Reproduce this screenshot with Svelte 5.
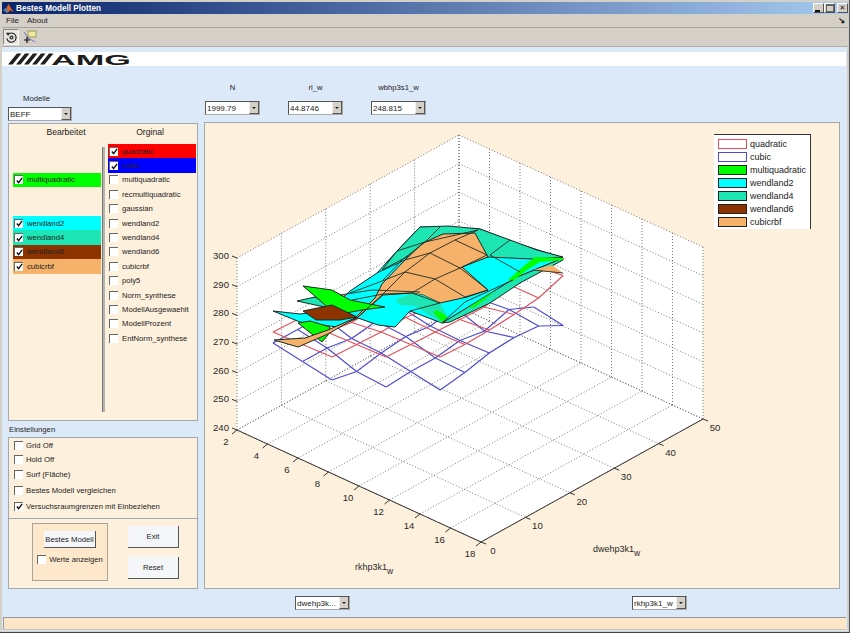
<script>
  const original = [
    { name: 'quadratic', color: '#ff0000', on: true },
    { name: 'cubic', color: '#0000ff', on: true },
    { name: 'multiquadratic' },
    { name: 'recmultiquadratic' },
    { name: 'gaussian' },
    { name: 'wendland2' },
    { name: 'wendland4' },
    { name: 'wendland6' },
    { name: 'cubicrbf' },
    { name: 'poly5' },
    { name: 'Norm_synthese' },
    { name: 'ModellAusgewaehlt' },
    { name: 'ModellProzent' },
    { name: 'EntNorm_synthese' }
  ];
  const edited = [
    null,
    null,
    { name: 'multiquadratic', color: '#00ff00' },
    null,
    null,
    { name: 'wendland2', color: '#00ffff' },
    { name: 'wendland4', color: '#1de5b4' },
    { name: 'wendland6', color: '#8c3300' },
    { name: 'cubicrbf', color: '#f6b26b' }
  ];
  const settings = [
    { name: 'Grid Off' },
    { name: 'Hold Off' },
    { name: 'Surf (Fläche)' },
    { name: 'Bestes Modell vergleichen', spaced: true },
    { name: 'Versuchsraumgrenzen mit Einbeziehen', on: true, spaced: true }
  ];
  const legend = [
    { name: 'quadratic', fill: '#fff', edge: '#e0505a' },
    { name: 'cubic', fill: '#fff', edge: '#4a4ad0' },
    { name: 'multiquadratic', fill: '#00ff00', edge: '#222' },
    { name: 'wendland2', fill: '#00ffff', edge: '#222' },
    { name: 'wendland4', fill: '#1de5b4', edge: '#222' },
    { name: 'wendland6', fill: '#8c3300', edge: '#222' },
    { name: 'cubicrbf', fill: '#f6b26b', edge: '#222' }
  ];

  // box corners in page coordinates, the svg viewBox starts at the panel corner
  const left = [237, 430];
  const bottom = [481, 542];
  const right = [703, 419];
  const back = [459, 307];
  const H = 172;
  const lerp = (a, b, t) => [a[0] + (b[0] - a[0]) * t, a[1] + (b[1] - a[1]) * t];

  const grid = [];
  for (let k = 0; k <= 6; k++) {
    const dz = (k * H) / 6;
    grid.push([left[0], left[1] - dz, back[0], back[1] - dz]);
    grid.push([back[0], back[1] - dz, right[0], right[1] - dz]);
  }
  for (let k = 0; k <= 5; k++) {
    const a = lerp(left, back, k / 5);
    const b = lerp(bottom, right, k / 5);
    grid.push([a[0], a[1], b[0], b[1]]);
    grid.push([a[0], a[1], a[0], a[1] - H]);
  }
  for (let k = 0; k <= 8; k++) {
    const a = lerp(left, bottom, k / 8);
    const b = lerp(back, right, k / 8);
    grid.push([a[0], a[1], b[0], b[1]]);
    grid.push([b[0], b[1], b[0], b[1] - H]);
  }

  const zTicks = [300, 290, 280, 270, 260, 250, 240].map((v, k) => ({ v, y: 258 + (k * H) / 6 }));
  const xTicks = [2, 4, 6, 8, 10, 12, 14, 16, 18].map((v, k) => {
    const p = lerp(left, bottom, k / 8);
    return { v, x: p[0], y: p[1] };
  });
  const yTicks = [0, 10, 20, 30, 40, 50].map((v, k) => {
    const p = lerp(bottom, right, k / 5);
    return { v, x: p[0], y: p[1] };
  });

  // wire meshes: lattice with a staircase boundary, y offsets per vertex
  const minJ = [0, 0, 0, 1, 2];
  const maxJ = [4, 5, 6, 7, 7];
  function mesh(y0, ay, by, bump) {
    const at = (i, j) => {
      const b = bump[i + ',' + j] || 0;
      return [273 + 29.5 * i + 24.6 * j, y0 + ay * i + by * j + b];
    };
    const lines = [];
    for (let i = 0; i <= 4; i++) {
      for (let j = minJ[i]; j <= maxJ[i]; j++) {
        const p = at(i, j);
        if (j < maxJ[i]) {
          const q = at(i, j + 1);
          lines.push([p[0], p[1], q[0], q[1]]);
        }
        if (i < 4 && j >= minJ[i + 1] && j <= maxJ[i + 1]) {
          const q = at(i + 1, j);
          lines.push([p[0], p[1], q[0], q[1]]);
        }
      }
    }
    return lines;
  }
  const blueMesh = mesh(343, 18.5, -13.5, {
    '2,1': 5, '3,1': 2, '4,3': -4, '4,4': -10, '4,5': -12, '4,6': -10, '4,7': 3,
    '3,6': -8, '3,7': 3, '1,2': 4, '2,3': -3, '3,4': -4, '2,5': -5
  });
  const redMesh = mesh(332, 12.5, -12.5, {
    '4,7': -19, '4,6': -9, '4,5': -5, '4,4': -2, '3,7': -16, '3,6': -10, '2,3': -2, '1,2': 3
  });

  const teal = '#1de5b4';
  const cyan = '#00ffff';
  const lime = '#00ff00';
  const sand = '#f6b26b';
  const surfaces = [
    { fill: cyan, line: true, pts: '273,311 300,322 337,327 358,318 378,325 395,327 410,311 442,323 490,295 515,278 563,258 510,241 480,229 420,227 397,251 377,273 350,291 330,310 300,314' },
    { fill: teal, line: true, pts: '420,227 448,226 480,229 510,240 537,250 563,257 533,259 487,257 470,250 440,240 405,258 382,270 397,251' },
    { fill: lime, line: true, pts: '298,323 310,321 330,327 328,335 322,342' },
    { fill: sand, line: true, pts: '443,234 475,233 488,257 462,267 488,290 467,297 440,303 423,295 412,293 383,295 358,317 340,327 328,334 298,347 274,340 305,338 328,330 355,318 375,298 382,284 405,260 423,243' },
    { fill: teal, pts: '395,300 412,293 423,295 440,303 448,318 442,323 415,306 400,305' },
    { fill: teal, line: true, pts: '442,323 478,301 515,278 563,258 563,260 520,283 490,303 450,322' },
    { fill: sand, pts: '533,270 552,265 563,273 540,271' },
    { fill: lime, pts: '535,257 563,258 563,260 540,262 527,270 513,281 508,280 525,265' },
    { fill: lime, pts: '468,308 480,300 495,291 488,297 475,307' },
    { fill: lime, pts: '433,312 442,322 448,317 437,310' },
    { fill: teal, line: true, pts: '297,301 315,297 336,310 320,306' },
    { fill: lime, line: true, pts: '303,286 332,290 350,300 385,307 362,310 335,315 323,303' },
    { fill: '#8c3300', line: true, pts: '303,311 332,305 357,317 340,320 316,320' }
  ];
  const edges = [
    '358,317 383,294 405,272 430,253 455,240 478,230',
    '412,293 435,279 460,268 487,255',
    '383,280 402,260 425,242 440,227',
    '430,253 460,268 488,290',
    '405,272 435,279 465,297',
    '455,240 487,255',
    '383,294 412,293 440,303',
    '397,251 425,242 478,230',
    '377,273 405,260 430,253',
    '350,293 377,283 405,272',
    '352,300 383,294',
    '340,295 372,290 420,292',
    '533,270 563,273',
    '465,297 488,290',
    '443,322 465,302 513,280',
    '490,255 510,240',
    '490,255 520,272',
    '410,311 440,303'
  ];
</script>

{#snippet check(on)}
  <span class="box">
    {#if on}
      <svg viewBox="0 0 8 8" width="7" height="7"><path d="M1 4 L3 6.5 L7 1" fill="none" stroke="#111" stroke-width="1.6" /></svg>
    {/if}
  </span>
{/snippet}

{#snippet popup(text, width)}
  <div class="popup" style="width: {width}px">
    <span class="popup-text">{text}</span>
    <span class="popup-btn"><i></i></span>
  </div>
{/snippet}

<div class="window">
  <div class="title">
    <svg class="app-icon" viewBox="0 0 12 12" width="11" height="11">
      <path d="M0 8 L4 5 L6 1 L9 6 L12 10 L8 8 L5 11 Z" fill="#d9641e" />
      <path d="M0 8 L4 5 L5 11 Z" fill="#3f7fc0" />
    </svg>
    <span>Bestes Modell Plotten</span>
    <div class="win-btns">
      <button class="win-btn"><i class="min"></i></button>
      <button class="win-btn"><i class="max"></i></button>
      <button class="win-btn close">✕</button>
    </div>
  </div>

  <div class="menu">
    <span>File</span>
    <span>About</span>
    <span class="dock">↘</span>
  </div>

  <div class="toolbar">
    <div class="tool pressed">
      <svg viewBox="0 0 14 14" width="13" height="13">
        <path d="M3 4 A5 5 0 1 1 2 8" fill="none" stroke="#222" stroke-width="1.2" />
        <path d="M1 2 L4.5 2 L3.5 5.5 Z" fill="#222" />
        <circle cx="7" cy="7" r="2.2" fill="#333" />
        <circle cx="7" cy="7" r="0.8" fill="#ddd" />
      </svg>
    </div>
    <div class="tool">
      <svg viewBox="0 0 14 14" width="14" height="14">
        <rect x="5" y="1" width="8" height="6" fill="#efe9a0" stroke="#8a8a50" stroke-width="0.8" />
        <path d="M1 2 L5 8 L12 12" fill="none" stroke="#6a6ac8" stroke-width="0.9" />
        <path d="M4 7 V13 M1 10 H7" stroke="#111" stroke-width="1.2" />
      </svg>
    </div>
  </div>

  <div class="body">
    <div class="logo">
      <svg viewBox="0 0 130 14" width="130" height="14">
        <polygon points="6,12.5 15,1.5 19.5,1.5 10.5,12.5" fill="#1c1c1c" />
        <polygon points="14,12.5 23,1.5 27.5,1.5 18.5,12.5" fill="#1c1c1c" />
        <polygon points="22,12.5 31,1.5 35.5,1.5 26.5,12.5" fill="#1c1c1c" />
        <polygon points="30,12.5 39,1.5 43.5,1.5 34.5,12.5" fill="#1c1c1c" />
        <polygon points="38,12.5 47,1.5 51.5,1.5 42.5,12.5" fill="#1c1c1c" />
        <text x="49" y="12.6" class="logo-text" textLength="80" lengthAdjust="spacingAndGlyphs">AMG</text>
      </svg>
    </div>

    <div class="content">
      <div class="head-left">
        <span class="modelle">Modelle</span>
        {@render popup('BEFF', 64)}
      </div>
      <div class="head-right">
        <div class="param"><span>N</span>{@render popup('1999.79', 55)}</div>
        <div class="param"><span>rl_w</span>{@render popup('44.8746', 55)}</div>
        <div class="param"><span>wbhp3s1_w</span>{@render popup('248.815', 55)}</div>
      </div>

      <div class="side">
        <div class="panel list">
          <div class="col">
            <div class="col-head edited">Bearbeitet</div>
            {#each edited as row}
              {#if row}
                <div class="row" style="background: {row.color}">
                  {@render check(true)}<span>{row.name}</span>
                </div>
              {:else}
                <div class="row"></div>
              {/if}
            {/each}
          </div>
          <div class="slider"></div>
          <div class="col">
            <div class="col-head orig">Orginal</div>
            {#each original as row}
              <div class="row" style={row.color ? `background: ${row.color}` : ''}>
                {@render check(row.on)}<span>{row.name}</span>
              </div>
            {/each}
          </div>
        </div>

        <div class="settings-label">Einstellungen</div>
        <div class="panel settings">
          {#each settings as row}
            <div class="set-row" class:spaced={row.spaced}>
              {@render check(row.on)}<span>{row.name}</span>
            </div>
          {/each}
        </div>
        <div class="panel actions">
          <div class="best">
            <button class="btn best-btn">Bestes Modell</button>
            <div class="werte">{@render check(false)}<span>Werte anzeigen</span></div>
          </div>
          <div class="btn-col">
            <button class="btn exit">Exit</button>
            <button class="btn reset">Reset</button>
          </div>
        </div>
      </div>

      <div class="panel plot">
        <svg viewBox="204 122 636 467" width="636" height="467">
          <polygon points="237,258 459,135 703,247 703,419 481,542 237,430" fill="#fff" />
          {#each grid as g}
            <line x1={g[0]} y1={g[1]} x2={g[2]} y2={g[3]} class="dots" />
          {/each}
          {#each blueMesh as l}
            <line x1={l[0]} y1={l[1]} x2={l[2]} y2={l[3]} stroke="#4a4ad0" stroke-width="1.1" />
          {/each}
          {#each redMesh as l}
            <line x1={l[0]} y1={l[1]} x2={l[2]} y2={l[3]} stroke="#e0505a" stroke-width="1.1" />
          {/each}
          {#each surfaces as s}
            <polygon points={s.pts} fill={s.fill} stroke={s.line ? '#1a2a22' : 'none'} stroke-width="1" />
          {/each}
          {#each edges as e}
            <polyline points={e} fill="none" stroke="#1e2a20" stroke-width="0.9" />
          {/each}

          <polyline points="237,430 481,542 703,419" fill="none" stroke="#333" stroke-width="1" />
          {#each zTicks as t}
            <line x1="232" y1={t.y - 2} x2="237" y2={t.y} stroke="#333" />
            <text x="229" y={t.y + 1} text-anchor="end" class="tick">{t.v}</text>
          {/each}
          {#each xTicks as t}
            <line x1={t.x} y1={t.y} x2={t.x - 5} y2={t.y + 4} stroke="#333" />
            <text x={t.x - 11} y={t.y + 15} text-anchor="middle" class="tick">{t.v}</text>
          {/each}
          {#each yTicks as t}
            <line x1={t.x} y1={t.y} x2={t.x + 5} y2={t.y + 2} stroke="#333" />
            <text x={t.x + 12} y={t.y + 12} text-anchor="middle" class="tick">{t.v}</text>
          {/each}
          <text x="355" y="570" class="axis">rkhp3k1<tspan dy="4" font-size="8.5">w</tspan></text>
          <text x="593" y="552" class="axis">dwehp3k1<tspan dy="4" font-size="8.5">w</tspan></text>
        </svg>

        <div class="legend">
          {#each legend as item}
            <div class="legend-row">
              <span class="swatch" style="background: {item.fill}; border-color: {item.edge}"></span>
              <span>{item.name}</span>
            </div>
          {/each}
        </div>
      </div>
    </div>

    <div class="foot">
      {@render popup('dwehp3k...', 55)}
      {@render popup('rkhp3k1_w', 55)}
    </div>
    <div class="status"></div>
  </div>
</div>

<style>
  :global(body) {
    margin: 0;
    background: #d4d0c8;
  }

  .window {
    width: 850px;
    height: 633px;
    box-sizing: border-box;
    padding: 2px 1px 1px 2px;
    display: flex;
    flex-direction: column;
    background: #d4d0c8;
    border-right: 1px solid #555;
    border-bottom: 1px solid #444;
    font-family: "Liberation Sans", Arial, sans-serif;
    font-size: 7.7px;
    color: #222;
    overflow: hidden;
  }

  .title {
    height: 12px;
    flex: none;
    display: flex;
    align-items: center;
    gap: 2px;
    padding-left: 1px;
    background: linear-gradient(to right, #0a246a, #a6caf0);
    color: #fff;
    font-weight: bold;
    font-size: 8.2px;
  }

  .win-btns {
    margin-left: auto;
    display: flex;
  }

  .win-btn {
    width: 11px;
    height: 10px;
    padding: 0;
    margin: 0;
    border: 1px solid;
    border-color: #fff #555 #555 #fff;
    background: #d4d0c8;
    color: #111;
    font-size: 7px;
    font-weight: bold;
    line-height: 8px;
    display: flex;
    align-items: center;
    justify-content: center;
    font-family: "DejaVu Sans", sans-serif;
  }

  .close {
    margin-left: 2px;
  }

  .min {
    width: 5px;
    height: 2px;
    background: #111;
    margin-top: 5px;
    margin-right: 2px;
  }

  .max {
    width: 6px;
    height: 5px;
    border: 1px solid #666;
    border-top-width: 2px;
  }

  .menu {
    height: 14px;
    flex: none;
    display: flex;
    align-items: center;
    gap: 8px;
    padding-left: 4px;
    font-size: 8px;
    box-sizing: border-box;
    border-bottom: 1px solid #a8a49c;
  }

  .dock {
    margin-left: auto;
    margin-right: 3px;
    font-size: 9px;
    font-weight: bold;
    font-family: "DejaVu Sans", sans-serif;
    color: #111;
  }

  .toolbar {
    height: 19px;
    flex: none;
    box-sizing: border-box;
    display: flex;
    align-items: center;
    gap: 3px;
    padding-left: 1px;
    border-bottom: 1px solid #b0aca4;
  }

  .tool {
    width: 16px;
    height: 16px;
    display: flex;
    align-items: center;
    justify-content: center;
  }

  .pressed {
    background: #e8e6e0;
    border-left: 1px solid #888;
    border-top: 1px solid #888;
    border-right: 1px solid #fff;
    border-bottom: 1px solid #fff;
    box-sizing: border-box;
  }

  .app-icon {
    flex: none;
  }

  .body {
    flex: 1;
    display: flex;
    flex-direction: column;
    background: #dce9f9;
    margin-right: 1px;
  }

  .logo {
    margin: 5px 1px 0 0;
    height: 14px;
    background: #fff;
    flex: none;
  }

  .logo svg {
    display: block;
    overflow: visible;
  }

  .logo-text {
    font-family: "Liberation Sans", Arial, sans-serif;
    font-weight: bold;
    font-size: 15px;
    fill: #1c1c1c;
  }

  .content {
    display: grid;
    grid-template-columns: 190px 636px;
    grid-template-rows: 56px 467px;
    column-gap: 6px;
    margin-left: 6px;
    flex: none;
  }

  .head-left {
    display: flex;
    flex-direction: column;
    justify-content: flex-end;
    padding-bottom: 1px;
    gap: 4px;
  }

  .modelle {
    margin-left: 15px;
  }

  .head-right {
    display: flex;
    align-items: flex-end;
    gap: 28px;
    padding: 0 0 7px 1px;
  }

  .param {
    width: 55px;
    display: flex;
    flex-direction: column;
    align-items: center;
    gap: 9px;
  }

  .popup {
    height: 14px;
    box-sizing: border-box;
    display: flex;
    align-items: center;
    background: #fff;
    border: 1px solid;
    border-color: #555 #aaa #aaa #555;
  }

  .popup-text {
    flex: 1;
    padding-left: 1px;
    white-space: nowrap;
    overflow: hidden;
    font-size: 8px;
  }

  .popup-btn {
    width: 10px;
    height: 12px;
    background: #d4d0c8;
    border-left: 1px solid #eee;
    border-right: 1px solid #555;
    border-bottom: 1px solid #555;
    box-sizing: border-box;
    display: flex;
    align-items: center;
    justify-content: center;
  }

  .popup-btn i {
    border-left: 2px solid transparent;
    border-right: 2px solid transparent;
    border-top: 2px solid #222;
  }

  .panel {
    box-sizing: border-box;
    background: #fdf0dc;
    border: 1px solid #a4a8ac;
  }

  .side {
    display: flex;
    flex-direction: column;
    padding-top: 1px;
  }

  .list {
    height: 298px;
    display: flex;
    padding-left: 4px;
  }

  .col {
    width: 88px;
    flex: none;
  }

  .col-head {
    height: 20px;
    text-align: center;
    font-size: 8.6px;
    padding-top: 3px;
    box-sizing: border-box;
    white-space: nowrap;
  }

  .edited {
    padding-left: 18px;
  }

  .orig {
    padding-right: 4px;
  }

  .row {
    height: 14.4px;
    display: flex;
    align-items: center;
    gap: 4px;
    padding-left: 1px;
    box-sizing: border-box;
    white-space: nowrap;
  }

  .slider {
    width: 3px;
    height: 265px;
    margin: 23px 3px 0 1px;
    flex: none;
    background: #b4b4b0;
    border-left: 1px solid #777;
    box-sizing: border-box;
  }

  .box {
    width: 8px;
    height: 8px;
    flex: none;
    background: #fff;
    border-top: 1px solid #666;
    border-left: 1px solid #666;
    display: flex;
    align-items: center;
    justify-content: center;
  }

  .settings-label {
    height: 16px;
    display: flex;
    align-items: center;
    padding-left: 1px;
  }

  .settings {
    height: 81px;
    padding-left: 5px;
    border-bottom: none;
  }

  .set-row {
    height: 14.5px;
    display: flex;
    align-items: center;
    gap: 3px;
  }

  .spaced {
    margin-top: 1.5px;
  }

  .actions {
    height: 71px;
    display: flex;
    align-items: flex-start;
    padding: 4px 0 0 23px;
    gap: 20px;
  }

  .best {
    width: 76px;
    height: 58px;
    box-sizing: border-box;
    background: #fde8cc;
    border: 1px solid #a8a49c;
    display: flex;
    flex-direction: column;
    align-items: center;
    padding-top: 7px;
    gap: 7px;
  }

  .btn {
    padding: 0;
    background: #f4f6f9;
    border: none;
    border-right: 1px solid #555;
    border-bottom: 1px solid #555;
    font-family: inherit;
    font-size: 7.7px;
    color: #222;
  }

  .best-btn {
    width: 52px;
    height: 17px;
  }

  .werte {
    display: flex;
    align-items: center;
    gap: 3px;
    white-space: nowrap;
  }

  .btn-col {
    display: flex;
    flex-direction: column;
    gap: 9px;
    padding-top: 3px;
  }

  .exit,
  .reset {
    width: 51px;
    height: 22px;
  }

  .plot {
    position: relative;
    background: #fdf0dc;
    border: none;
    box-shadow: inset 0 0 0 1px #a4a8ac;
  }

  .plot svg {
    display: block;
  }

  .dots {
    stroke: #555;
    stroke-width: 0.8;
    stroke-dasharray: 1 2;
  }

  .tick {
    font-family: "Liberation Sans", Arial, sans-serif;
    font-size: 9.6px;
    fill: #2a2a2a;
  }

  .axis {
    font-family: "Liberation Sans", Arial, sans-serif;
    font-size: 9px;
    fill: #2a2a2a;
  }

  .legend {
    position: absolute;
    left: 510px;
    top: 12px;
    width: 97px;
    height: 95px;
    box-sizing: border-box;
    background: #fff;
    border-top: 1px solid #333;
    border-right: 1px solid #333;
    padding: 2px 0 0 4px;
    font-size: 9px;
  }

  .legend-row {
    height: 13.1px;
    display: flex;
    align-items: center;
    gap: 3px;
  }

  .swatch {
    width: 29px;
    height: 10px;
    box-sizing: border-box;
    border: 1px solid;
    flex: none;
  }

  .foot {
    height: 28px;
    flex: none;
    display: flex;
    align-items: center;
    gap: 282px;
    padding-left: 293px;
  }

  .status {
    height: 13px;
    flex: none;
    margin: 0 1px;
    background: #fde6c8;
    border-top: 1px solid #999;
    border-left: 1px solid #999;
    border-bottom: 1px solid #c4c0b8;
    box-sizing: border-box;
  }
</style>
